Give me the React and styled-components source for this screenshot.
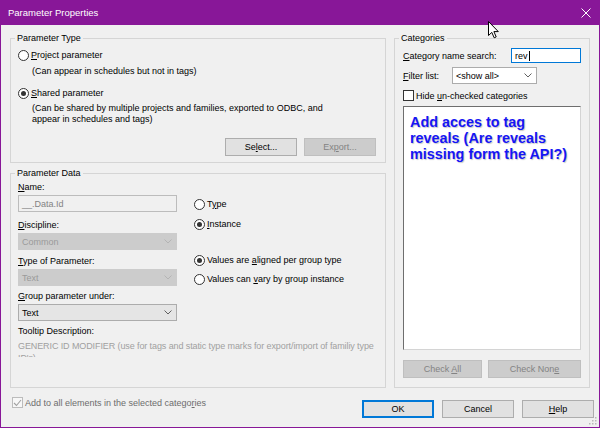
import React from 'react';
import styled, { createGlobalStyle } from 'styled-components';

const GlobalStyle = createGlobalStyle`
  html, body {
    margin: 0;
    padding: 0;
    background: #f0f0f0;
  }
  body {
    font-family: "Liberation Sans", Arial, sans-serif;
    font-size: 9px;
    color: #000000;
  }
  * {
    box-sizing: border-box;
  }
`;

const Window = styled.div`
  position: relative;
  width: 600px;
  height: 428px;
  display: flex;
  flex-direction: column;
  background: #f0f0f0;
  border: 1px solid #881798;
  border-top: 0;
  overflow: hidden;
`;

const TitleBar = styled.div`
  height: 25px;
  flex: none;
  display: flex;
  align-items: center;
  justify-content: space-between;
  padding-left: 7px;
  background: #881798;
  color: #ffffff;
  font-size: 9.5px;
`;

const CloseBox = styled.div`
  width: 26px;
  height: 25px;
  display: flex;
  align-items: center;
  justify-content: center;
`;

const Body = styled.div`
  flex: 1;
  display: flex;
  flex-direction: column;
  padding: 13px 9px 0 9px;
`;

const Main = styled.div`
  height: 350px;
  display: flex;
  gap: 8px;
`;

const LeftCol = styled.div`
  width: 376px;
  display: flex;
  flex-direction: column;
  gap: 10px;
`;

const GroupBox = styled.section`
  flex: ${({ $grow }) => ($grow ? 1 : 'none')};
  width: ${({ $w }) => ($w ? `${$w}px` : 'auto')};
  display: flex;
  flex-direction: column;
  border: 1px solid #d5d5d5;
  padding: 0 ${({ $pr }) => $pr}px ${({ $pb }) => $pb}px ${({ $pl }) => $pl}px;
`;

const Caption = styled.div`
  align-self: flex-start;
  height: 12px;
  line-height: 12px;
  margin: -7px 0 0 ${({ $ml }) => $ml}px;
  padding: 0 2px;
  background: #f0f0f0;
`;

const Key = styled.span`
  text-decoration: underline;
  text-underline-offset: 1px;
`;

const RadioRow = styled.div`
  display: flex;
  align-items: center;
  height: 14px;
  margin-top: ${({ $mt }) => $mt || 0}px;
  white-space: nowrap;
`;

const RadioCircle = styled.span`
  width: 11px;
  height: 11px;
  flex: none;
  margin-right: 2px;
  border: 1px solid #333333;
  border-radius: 50%;
  background: #ffffff;
  display: flex;
  align-items: center;
  justify-content: center;
  &::after {
    content: '';
    width: 5px;
    height: 5px;
    border-radius: 50%;
    background: ${({ $checked }) => ($checked ? '#333333' : 'transparent')};
  }
`;

const Radio = ({ checked, mt, children }) => (
  <RadioRow $mt={mt}>
    <RadioCircle $checked={checked} />
    <span>{children}</span>
  </RadioRow>
);

const Hint = styled.div`
  margin: ${({ $mt }) => $mt || 0}px 0 0 14px;
  line-height: 11px;
  white-space: nowrap;
`;

const ButtonRow = styled.div`
  display: flex;
  justify-content: ${({ $spread }) => ($spread ? 'space-between' : 'flex-end')};
  gap: ${({ $gap }) => $gap || 0}px;
  margin-top: ${({ $mt }) => $mt || 0}px;
`;

const Button = styled.button`
  width: ${({ $w }) => $w || 72}px;
  height: 18px;
  padding: 0;
  font-family: "Liberation Sans", Arial, sans-serif;
  font-size: 9px;
  color: ${({ disabled }) => (disabled ? '#838383' : '#000000')};
  background: ${({ disabled }) => (disabled ? '#cccccc' : '#e1e1e1')};
  border: 1px solid
    ${({ $default, disabled }) => ($default ? '#0078d7' : disabled ? '#bfbfbf' : '#adadad')};
  box-shadow: ${({ $default }) => ($default ? 'inset 0 0 0 1px #0078d7' : 'none')};
`;

const DataColumns = styled.div`
  display: flex;
`;

const FieldCol = styled.div`
  width: 159px;
  display: flex;
  flex-direction: column;
`;

const ScopeCol = styled.div`
  margin-left: 17px;
  display: flex;
  flex-direction: column;
`;

const FieldLabel = styled.div`
  height: 12px;
  line-height: 12px;
  margin-top: ${({ $mt }) => $mt || 0}px;
  white-space: nowrap;
  width: ${({ $w }) => ($w ? `${$w}px` : 'auto')};
  flex: none;
`;

const TextBox = styled.div`
  height: ${({ $h }) => $h || 17}px;
  width: ${({ $w }) => ($w ? `${$w}px` : '100%')};
  margin-top: ${({ $mt }) => $mt || 0}px;
  display: flex;
  align-items: center;
  padding-left: 3px;
  background: ${({ $focused }) => ($focused ? '#ffffff' : '#f0f0f0')};
  border: 1px solid ${({ $focused }) => ($focused ? '#0078d7' : '#bcbcbc')};
  color: ${({ $focused }) => ($focused ? '#000000' : '#838383')};
`;

const Caret = styled.span`
  width: 1px;
  height: 10px;
  margin-left: 1px;
  background: #000000;
`;

const comboStyles = {
  disabled: { bg: '#cccccc', border: '#cccccc', color: '#9a9a9a', arrow: '#b4b4b4' },
  normal: { bg: '#e5e5e5', border: '#acacac', color: '#000000', arrow: '#606060' },
  white: { bg: '#ffffff', border: '#acacac', color: '#000000', arrow: '#606060' },
};

const ComboBox = styled.div`
  width: ${({ $w }) => $w}px;
  height: 17px;
  margin-top: ${({ $mt }) => $mt || 0}px;
  display: flex;
  align-items: center;
  justify-content: space-between;
  padding: 0 4px 0 3px;
  background: ${({ $variant }) => comboStyles[$variant].bg};
  border: 1px solid ${({ $variant }) => comboStyles[$variant].border};
  color: ${({ $variant }) => comboStyles[$variant].color};
`;

const Combo = ({ w, mt, variant = 'normal', children }) => (
  <ComboBox $w={w} $mt={mt} $variant={variant}>
    <span>{children}</span>
    <svg width="8" height="5" viewBox="0 0 8 5">
      <polyline
        points="0.5,0.5 4,4 7.5,0.5"
        fill="none"
        stroke={comboStyles[variant].arrow}
        strokeWidth="1"
      />
    </svg>
  </ComboBox>
);

const TooltipText = styled.div`
  height: 17px;
  margin: 3px -7px 0 0;
  line-height: 12px;
  overflow: hidden;
  white-space: nowrap;
  letter-spacing: -0.1px;
  color: #a0a0a0;
`;

const FormRow = styled.div`
  display: flex;
  align-items: center;
  justify-content: ${({ $spread }) => ($spread ? 'space-between' : 'flex-start')};
  height: ${({ $h }) => $h}px;
  margin-top: ${({ $mt }) => $mt || 0}px;
`;

const CheckRow = styled.div`
  display: flex;
  align-items: center;
  gap: 2px;
  height: 11px;
  margin-top: ${({ $mt }) => $mt || 0}px;
  color: ${({ $disabled }) => ($disabled ? '#6d6d6d' : '#000000')};
  white-space: nowrap;
`;

const CheckSquare = styled.span`
  width: 11px;
  height: 11px;
  flex: none;
  display: flex;
  align-items: center;
  justify-content: center;
  border: 1px solid ${({ $disabled }) => ($disabled ? '#bcbcbc' : '#333333')};
  background: ${({ $disabled }) => ($disabled ? '#f7f7f7' : '#ffffff')};
`;

const Check = ({ checked, disabled, mt, children }) => (
  <CheckRow $mt={mt} $disabled={disabled}>
    <CheckSquare $disabled={disabled}>
      {checked && (
        <svg width="9" height="8" viewBox="0 0 9 8">
          <polyline
            points="1,4 3.5,6.5 8,1"
            fill="none"
            stroke={disabled ? '#a0a0a0' : '#333333'}
            strokeWidth="1.1"
          />
        </svg>
      )}
    </CheckSquare>
    <span>{children}</span>
  </CheckRow>
);

const CategoryList = styled.div`
  flex: 1;
  margin-top: 5px;
  padding: 7px 6px;
  background: #ffffff;
  border: 1px solid;
  border-color: #6e6e6e #d4d4d4 #d4d4d4 #6e6e6e;
  color: #1515f5;
  font-weight: bold;
  font-size: 14.4px;
  line-height: 16px;
  white-space: nowrap;
  text-shadow: 1px 1px 1px rgba(0, 0, 0, 0.22);
`;

const Footer = styled.div`
  height: 39px;
  display: flex;
  align-items: flex-start;
  justify-content: space-between;
  margin: 0 -4px 0 2px;
`;

const FooterCheck = styled.div`
  margin-top: 9px;
`;

const Cursor = styled.svg`
  position: absolute;
  left: 487px;
  top: 21px;
`;

const Grip = styled.svg`
  position: absolute;
  right: 2px;
  bottom: 2px;
`;

const App = () => (
  <>
    <GlobalStyle />
    <Window>
      <TitleBar>
        <span>Parameter Properties</span>
        <CloseBox>
          <svg width="10" height="10" viewBox="0 0 10 10">
            <path d="M0.5 0.5 L9.5 9.5 M9.5 0.5 L0.5 9.5" stroke="#ffffff" strokeWidth="1" />
          </svg>
        </CloseBox>
      </TitleBar>
      <Body>
        <Main>
          <LeftCol>
            <GroupBox $pl={7} $pr={9} $pb={6}>
              <Caption $ml={-3}>Parameter Type</Caption>
              <Radio mt={4}>
                <Key>P</Key>roject parameter
              </Radio>
              <Hint $mt={4}>(Can appear in schedules but not in tags)</Hint>
              <Radio mt={9} checked>
                <Key>S</Key>hared parameter
              </Radio>
              <Hint $mt={3}>
                (Can be shared by multiple projects and families, exported to ODBC, and
                <br />
                appear in schedules and tags)
              </Hint>
              <ButtonRow $mt={13} $gap={7}>
                <Button>
                  Se<Key>l</Key>ect...
                </Button>
                <Button disabled>
                  Ex<Key>p</Key>ort...
                </Button>
              </ButtonRow>
            </GroupBox>

            <GroupBox $grow $pl={7} $pr={9} $pb={6}>
              <Caption $ml={-3}>Parameter Data</Caption>
              <DataColumns>
                <FieldCol>
                  <FieldLabel $mt={2}>
                    <Key>N</Key>ame:
                  </FieldLabel>
                  <TextBox $mt={2}>__.Data.Id</TextBox>
                  <FieldLabel $mt={7}>
                    <Key>D</Key>iscipline:
                  </FieldLabel>
                  <Combo w={159} mt={2} variant="disabled">
                    Common
                  </Combo>
                  <FieldLabel $mt={5}>
                    <Key>T</Key>ype of Parameter:
                  </FieldLabel>
                  <Combo w={159} mt={2} variant="disabled">
                    Text
                  </Combo>
                  <FieldLabel $mt={4}>
                    <Key>G</Key>roup parameter under:
                  </FieldLabel>
                  <Combo w={159} mt={2}>
                    Text
                  </Combo>
                </FieldCol>
                <ScopeCol>
                  <Radio mt={18}>
                    T<Key>y</Key>pe
                  </Radio>
                  <Radio mt={6} checked>
                    <Key>I</Key>nstance
                  </Radio>
                  <Radio mt={22} checked>
                    Values are <Key>a</Key>ligned per group type
                  </Radio>
                  <Radio mt={5}>
                    Values can <Key>v</Key>ary by group instance
                  </Radio>
                </ScopeCol>
              </DataColumns>
              <FieldLabel $mt={4}>Tooltip Description:</FieldLabel>
              <TooltipText>
                GENERIC ID MODIFIER (use for tags and static type marks for export/import of familiy type
                <br />
                ID's)
              </TooltipText>
            </GroupBox>
          </LeftCol>

          <GroupBox $w={196} $pl={8} $pr={8} $pb={9}>
            <Caption $ml={-4}>Categories</Caption>
            <FormRow $h={15} $mt={4} $spread>
              <FieldLabel>
                <Key>C</Key>ategory name search:
              </FieldLabel>
              <TextBox $focused $w={70} $h={15}>
                rev
                <Caret />
              </TextBox>
            </FormRow>
            <FormRow $h={17} $mt={4}>
              <FieldLabel $w={49}>
                <Key>F</Key>ilter list:
              </FieldLabel>
              <Combo w={85} variant="white">
                &lt;show all&gt;
              </Combo>
            </FormRow>
            <Check mt={6}>
              Hide <Key>u</Key>n-checked categories
            </Check>
            <CategoryList>
              Add acces to tag
              <br />
              reveals (Are reveals
              <br />
              missing form the API?)
            </CategoryList>
            <ButtonRow $mt={10} $spread>
              <Button $w={79} disabled>
                Check <Key>A</Key>ll
              </Button>
              <Button $w={93} disabled>
                Check Non<Key>e</Key>
              </Button>
            </ButtonRow>
          </GroupBox>
        </Main>

        <Footer>
          <FooterCheck>
            <Check checked disabled>
              Add to all elements in the selected catego<Key>r</Key>ies
            </Check>
          </FooterCheck>
          <ButtonRow $mt={12} $gap={8}>
            <Button $default>OK</Button>
            <Button>Cancel</Button>
            <Button>
              <Key>H</Key>elp
            </Button>
          </ButtonRow>
        </Footer>
      </Body>

      <Grip width="8" height="8" viewBox="0 0 8 8">
        <rect x="6" y="0" width="1.5" height="1.5" fill="#b8b8b8" />
        <rect x="3" y="3" width="1.5" height="1.5" fill="#b8b8b8" />
        <rect x="6" y="3" width="1.5" height="1.5" fill="#b8b8b8" />
        <rect x="0" y="6" width="1.5" height="1.5" fill="#b8b8b8" />
        <rect x="3" y="6" width="1.5" height="1.5" fill="#b8b8b8" />
        <rect x="6" y="6" width="1.5" height="1.5" fill="#b8b8b8" />
      </Grip>

      <Cursor width="12" height="18" viewBox="0 0 12 18">
        <path
          d="M0.5 0.5 L0.5 14.5 L3.8 11.4 L6.2 16.8 L8.2 15.9 L5.9 10.6 L10.3 10.6 Z"
          fill="#ffffff"
          stroke="#000000"
          strokeWidth="1"
          strokeLinejoin="miter"
        />
      </Cursor>
    </Window>
  </>
);

export default App;
